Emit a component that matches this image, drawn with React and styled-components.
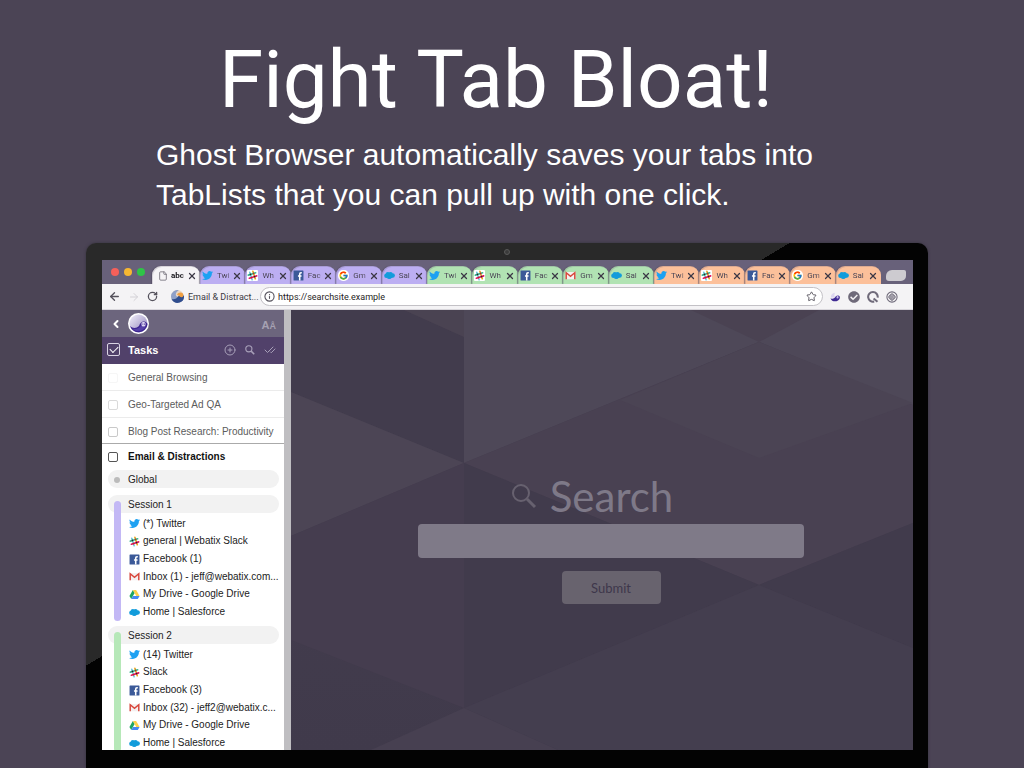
import React from "react";
import styled, { createGlobalStyle } from "styled-components";
import { FaTwitter, FaCheckCircle } from "react-icons/fa";
import { FcGoogle } from "react-icons/fc";
import { ArrowLeft, ArrowRight, RotateCw, Info, Star, File, X, ChevronLeft, CirclePlus, CheckCheck } from "lucide-react";

const Global = createGlobalStyle`
  * { box-sizing: border-box; }
  body { margin: 0; background: #4b4455; }
  button, input { font: inherit; color: inherit; }
  svg { display: block; flex: none; }
`;

const sans = `"Liberation Sans", Arial, sans-serif`;
const ui = `Roboto, "Liberation Sans", sans-serif`;

const Page = styled.main`
  display: flex;
  flex-direction: column;
  height: 100vh;
  min-height: 600px;
  background: #4b4455;
  overflow: hidden;
  font-family: ${sans};
`;

const Hero = styled.header`
  max-width: 680px;
  margin: 32px 40px 28px 156px;
  color: #fff;
`;

const Title = styled.h1`
  margin: 0 0 7px;
  font: 400 80px/96px Roboto, sans-serif;
  text-align: center;
  white-space: nowrap;
`;

const Lead = styled.p`
  margin: 0;
  font-size: 30px;
  line-height: 40px;
`;

const Device = styled.section`
  position: relative;
  flex: 1;
  min-height: 0;
  display: flex;
  margin: 0 96px 0 86px;
  padding: 17px 15px 18px 16px;
  border-radius: 10px 10px 0 0;
  background: linear-gradient(149deg, #292929 41%, #030303 41%);
  box-shadow: 0 0 3px #35303c;
`;

const Camera = styled.span`
  position: absolute;
  top: 6px;
  left: 50%;
  width: 6px;
  height: 6px;
  margin-left: -3px;
  border: 1px solid #5a5a5a;
  border-radius: 50%;
  background: #3b3b3b;
`;

const Screen = styled.div`
  flex: 1;
  min-width: 0;
  display: flex;
  flex-direction: column;
  overflow: hidden;
  background: #fff;
`;

const TabStrip = styled.div`
  display: flex;
  align-items: flex-end;
  height: 24px;
  padding: 0 7px 0 8px;
  background: #68617a;
`;

const Lights = styled.div`
  display: flex;
  gap: 5px;
  width: 42px;
  padding: 0 0 8px 1px;
`;

const Light = styled.span`
  width: 8px;
  height: 8px;
  border-radius: 50%;
  background: ${(p) => p.$color};
`;

const TabList = styled.div`
  flex: 1;
  min-width: 0;
  display: flex;
`;

const tabColors = { active: "#f5f3f6", violet: "#bcaef2", green: "#b1e3b3", orange: "#fcc09a" };

const TabItem = styled.div`
  flex: ${(p) => (p.$tone === "active" ? "0 0 48px" : "1 1 0")};
  min-width: 0;
  display: flex;
  align-items: center;
  height: 18px;
  padding: 1px 3px 0 ${(p) => (p.$tone === "active" ? "6px" : "2px")};
  border-radius: 9px 9px 0 0;
  background: ${(p) => tabColors[p.$tone]};
  box-shadow: inset 1px 1px 0 #5d567033, -1px 0 1px #4c455c88;
  color: #3c3846;
`;

const TabName = styled.span`
  flex: 1;
  min-width: 0;
  margin-left: ${(p) => (p.$bold ? 3 : 4)}px;
  color: ${(p) => (p.$bold ? "#17151b" : "#4a4555")};
  font: ${(p) => (p.$bold ? 700 : 400)} 8px/10px ${ui};
  white-space: nowrap;
  mask-image: linear-gradient(90deg, #000 60%, #0004);
`;

const IconButton = styled.button`
  display: grid;
  place-items: center;
  flex: none;
  padding: 0;
  border: 0;
  background: none;
  color: inherit;
`;

const NewTab = styled.button`
  width: 20px;
  height: 11px;
  margin: 0 0 3px 5px;
  padding: 0;
  border: 0;
  border-radius: 6px 2px 5px 3px;
  background: #cdcbd0;
`;

const Toolbar = styled.div`
  display: flex;
  align-items: center;
  height: 26px;
  padding: 0 15px 0 6px;
  background: #f4f3f5;
  border-bottom: 1px solid #d9d7dc;
  color: #55525c;
  font: 9px/12px ${ui};
`;

const NavButtons = styled.div`
  display: flex;
  gap: 7px;
  width: 63px;
`;

const Identity = styled.div`
  display: flex;
  align-items: center;
  gap: 4px;
  width: 89px;
  color: #3d3a42;
  white-space: nowrap;
`;

const Address = styled.label`
  flex: 1;
  min-width: 0;
  display: flex;
  align-items: center;
  gap: 3px;
  height: 19px;
  padding: 0 5px 0 3px;
  border: 1px solid #c3c1c6;
  border-radius: 10px;
  background: #fff;
`;

const AddressInput = styled.input`
  flex: 1;
  min-width: 0;
  padding: 0;
  border: 0;
  outline: 0;
  background: none;
  color: #1f1d24;
`;

const Extensions = styled.div`
  display: flex;
  gap: 7px;
  margin-left: 6px;
  color: #6f6a7a;
`;

const Content = styled.div`
  flex: 1;
  min-height: 0;
  display: flex;
`;

const Sidebar = styled.aside`
  flex: 0 0 189px;
  min-height: 0;
  overflow: hidden;
  border-right: 7px solid #bfbec1;
  background: #fff;
  color: #222;
  font-size: 10px;
  line-height: 12px;
`;

const Brand = styled.div`
  display: flex;
  align-items: center;
  gap: 6px;
  height: 27px;
  padding: 0 8px;
  background: #6c657d;
  color: #fff;
`;

const TextSize = styled.button`
  margin: 3px 0 0 auto;
  padding: 0;
  border: 0;
  background: none;
  color: #a6a1b2;
  font: 700 11px/14px ${sans};
  small { font-size: 9px; }
`;

const TasksBar = styled.div`
  display: flex;
  align-items: center;
  height: 27px;
  padding: 0 8px 2px 5px;
  background: #51416a;
  color: #a79fb8;
`;

const TasksLabel = styled.label`
  flex: 1;
  display: flex;
  align-items: center;
  gap: 8px;
  color: #fff;
  font: 700 11px/14px ${sans};
`;

const Check = styled.input`
  appearance: none;
  flex: none;
  width: ${(p) => (p.$large ? 13 : 10)}px;
  height: ${(p) => (p.$large ? 13 : 10)}px;
  margin: ${(p) => (p.$large ? 0 : "0 1px")};
  border: 1px solid ${(p) => p.$color};
  border-radius: 2px;
  display: grid;
  place-items: center;
  &:checked::after {
    content: "";
    width: 7px;
    height: 4px;
    margin-bottom: 2px;
    border: solid #fff;
    border-width: 0 0 1px 1px;
    rotate: -45deg;
  }
`;

const Tools = styled.div`
  display: flex;
  align-items: center;
  gap: 9px;
`;

const TaskRow = styled.label`
  display: flex;
  align-items: center;
  gap: 9px;
  height: ${(p) => (p.$last ? 26 : 27)}px;
  padding: 2px 0 0 5px;
  border-bottom: 1px solid ${(p) => (p.$last ? "#aaa" : "#ebebeb")};
  color: #5c5c5c;
  white-space: nowrap;
`;

const GroupRow = styled(TaskRow)`
  height: 26px;
  padding-top: 0;
  border: 0;
  color: #111;
  font-weight: 700;
`;

const Sessions = styled.div`
  display: grid;
  gap: 5px;
  padding: 0 7px 0 6px;
`;

const Pill = styled.div`
  grid-column: 1 / -1;
  grid-row: 1;
  display: flex;
  align-items: center;
  height: 18px;
  padding: 1px 0 0 ${(p) => (p.$dot ? 6 : 20)}px;
  gap: 8px;
  border-radius: 9px;
  background: #f2f2f2;
`;

const Dot = styled.span`
  width: 6px;
  height: 6px;
  border-radius: 50%;
  background: #bbb;
`;

const Session = styled.section`
  display: grid;
  grid-template-columns: 20px 1fr;
  grid-template-rows: 18px auto;
  row-gap: 2px;
  &:first-of-type { margin-top: 2px; }
`;

const Bar = styled.span`
  grid-column: 1;
  grid-row: 1 / 3;
  z-index: 1;
  width: 7px;
  margin: 6px 0 0 6px;
  border-radius: 4px;
  background: ${(p) => p.$color};
`;

const Links = styled.ul`
  grid-column: 2;
  grid-row: 2;
  display: grid;
  grid-template-rows: repeat(6, 1fr);
  height: 106px;
  margin: 0;
  padding: 0;
  list-style: none;
`;

const SiteLink = styled.a`
  display: flex;
  align-items: center;
  gap: 3px;
  height: 100%;
  padding-left: 1px;
  color: #222;
  text-decoration: none;
  white-space: nowrap;
`;

const Viewport = styled.div`
  position: relative;
  flex: 1;
  min-width: 0;
  overflow: hidden;
  background: #423c4d;
`;

const Backdrop = styled.svg`
  position: absolute;
  inset: 0;
  width: 100%;
  height: 100%;
`;

const SearchForm = styled.form`
  position: relative;
  display: flex;
  flex-direction: column;
  align-items: center;
  padding: 160px 0 0 18px;
  font-family: Lato, sans-serif;
`;

const SearchTitle = styled.label`
  display: flex;
  align-items: center;
  gap: 13px;
  margin: 0 38px 2px 0;
  color: #7e7988;
  font-size: 42px;
  line-height: 52px;
`;

const SearchInput = styled.input`
  width: 386px;
  max-width: 90%;
  height: 34px;
  padding: 0 10px;
  border: 0;
  border-radius: 4px;
  background: #7f7a88;
`;

const Submit = styled.button`
  width: 99px;
  height: 33px;
  margin-top: 13px;
  padding: 0;
  border: 0;
  border-radius: 4px;
  background: #68636e;
  color: #3e374b;
  font-size: 13px;
`;

const SlackIcon = ({ size }) => (
  <svg width={size} height={size} viewBox="0 0 20 20" strokeWidth="3" strokeLinecap="round">
    <rect width="20" height="20" rx="2" fill="#fff" />
    <g transform="rotate(-18 10 10)">
      <path d="M7 3v14" stroke="#6ecadc" />
      <path d="M13 3v14" stroke="#e9a820" />
      <path d="M3 7h14" stroke="#3eb991" />
      <path d="M3 13h14" stroke="#e01563" />
      <path d="M7 7v0M13 13v0" stroke="#33202a" />
      <path d="M13 7v0M7 13v0" stroke="#c3271c" />
    </g>
  </svg>
);

const FacebookIcon = ({ size }) => (
  <svg width={size} height={size} viewBox="0 0 20 20">
    <rect x="1" y="1" width="18" height="18" rx="1" fill="#3b5998" />
    <path d="M16 5h-1.500q-2.300 0-2.300 2.300V19M9 11h6.500" fill="none" stroke="#fff" strokeWidth="2.800" />
  </svg>
);

const GmailIcon = ({ size }) => (
  <svg width={size} height={size} viewBox="0 0 20 20">
    <rect x="1" y="3.500" width="18" height="13.500" rx="1" fill="#f4f0f0" />
    <path d="M2.200 17V5l7.800 6.500L17.800 5v12" fill="none" stroke="#d8453a" strokeWidth="2.600" />
  </svg>
);

const DriveIcon = ({ size }) => (
  <svg width={size} height={size} viewBox="0 0 20 20">
    <path d="M7 2 0.800 12.500 4 18l6.300-10.600z" fill="#1fa463" />
    <path d="M7 2h6l6.200 10.500h-6z" fill="#ffd04b" />
    <path d="M7.300 12.500h11.900L16 18H4z" fill="#4688f4" />
  </svg>
);

const SalesforceIcon = ({ size }) => (
  <svg width={size} height={size} viewBox="0 0 20 20" fill="#129cdb">
    <circle cx="4.500" cy="10.500" r="4.200" />
    <circle cx="7" cy="7.500" r="4" />
    <circle cx="12" cy="7.500" r="3.800" />
    <circle cx="15.800" cy="10" r="4" />
    <circle cx="9.500" cy="12.500" r="4" />
    <circle cx="13" cy="12" r="3" />
  </svg>
);

const TwitterIcon = ({ size }) => <FaTwitter size={size} color="#1da1f2" />;

const GoogleIcon = ({ size }) => (
  <svg width={size} height={size} viewBox="0 0 20 20">
    <rect width="20" height="20" rx="9" fill="#fff" />
    <FcGoogle x="1" y="1" width="18" height="18" size={18} />
  </svg>
);

const PageIcon = ({ size }) => <File size={size} strokeWidth={2} color="#716d78" />;

const GhostIcon = ({ size }) => (
  <svg width={size} height={size} viewBox="0 0 42 42">
    <defs>
      <linearGradient id="orb" x1="0" y1="0" x2="1" y2="1">
        <stop offset="0" stopColor="#f4f1fb" />
        <stop offset="0.6" stopColor="#b5acd3" />
      </linearGradient>
    </defs>
    <circle cx="21" cy="21" r="21" fill="#fff" />
    <circle cx="21" cy="21" r="18" fill="url(#orb)" />
    <path d="M4 26c5 5 13 5 18 0 2-6 5-9 10-9 4 0 7 3 7 6A18 18 0 0 1 4 26z" fill="#3d2590" />
    <path d="M9 31c7 2 14 0 17-6 3 4 7 4 10 2-4 9-20 13-27 4z" fill="#5540a8" />
    <rect x="27" y="18" width="8" height="9" rx="3" fill="#ddd6f3" />
    <path d="M29 21h1.500v2.500H29zM32 21h1.500v2.500H32z" fill="#3d2590" />
  </svg>
);

const MiniGhost = () => (
  <svg width="12" height="12" viewBox="0 0 20 20">
    <path d="M3 11a8 8 0 0 1 7-8c-2 4-1 7 1 8z" fill="#dcd6ef" />
    <path d="M2.500 12c3 1.500 6 1 7.500-1 1-2 2.500-3.500 5-3.500 2.500 0 3.500 2 3 4.500-1.500 6-13 8-15.500 0z" fill="#3f2a93" />
    <rect x="12.500" y="8.500" width="3.500" height="4" rx="1.500" fill="#c4b9ea" />
  </svg>
);

const IdentityIcon = () => (
  <svg width="13" height="13" viewBox="0 0 20 20">
    <circle cx="10" cy="10" r="10" fill="#e9d6c4" />
    <path d="M0 10a10 10 0 0 1 12-9.800C7 3 6 8 9 10s7-1 11-.5V10a10 10 0 0 1-20 0z" fill="#8fa0c8" />
    <path d="M1 14c5 1 8-1 10-4s6-3 9-1a10 10 0 0 1-19 5z" fill="#2f4d8e" />
    <path d="M9 7c2-3 6-4 9-2 2 4 1 6-2 6s-5-4-7-4z" fill="#f0a044" />
  </svg>
);

const QIcon = () => (
  <svg width="12" height="12" viewBox="0 0 20 20" fill="none" stroke="currentColor" strokeWidth="3.400">
    <path d="M12 17.500A8 8 0 1 1 17.800 11" />
    <path d="M11 12.500 17.500 18" />
  </svg>
);

const TargetIcon = () => (
  <svg width="12" height="12" viewBox="0 0 20 20" fill="none" stroke="currentColor" strokeWidth="1.800">
    <circle cx="10" cy="10" r="8.500" />
    <rect x="5.800" y="5.800" width="8.400" height="8.400" rx="1.500" transform="rotate(45 10 10)" />
    <circle cx="10" cy="10" r="2" />
  </svg>
);

const Magnifier = ({ size, color = "currentColor", weight = 2 }) => (
  <svg width={size} height={size} viewBox="0 0 26 26" fill="none" stroke={color}>
    <circle cx="10" cy="10" r="8" strokeWidth={weight} />
    <path d="M16 16l8 8" strokeWidth={weight + 1} />
  </svg>
);

const tabs = [
  ["active", PageIcon, "abc"],
  ["violet", TwitterIcon, "Twi"],
  ["violet", SlackIcon, "Wh"],
  ["violet", FacebookIcon, "Fac"],
  ["violet", GoogleIcon, "Gm"],
  ["violet", SalesforceIcon, "Sal"],
  ["green", TwitterIcon, "Twi"],
  ["green", SlackIcon, "Wh"],
  ["green", FacebookIcon, "Fac"],
  ["green", GmailIcon, "Gm"],
  ["green", SalesforceIcon, "Sal"],
  ["orange", TwitterIcon, "Twi"],
  ["orange", SlackIcon, "Wh"],
  ["orange", FacebookIcon, "Fac"],
  ["orange", GoogleIcon, "Gm"],
  ["orange", SalesforceIcon, "Sal"],
];

const sessions = [
  {
    name: "Session 1",
    color: "#c3b8f5",
    links: [
      [TwitterIcon, "(*) Twitter"],
      [SlackIcon, "general | Webatix Slack"],
      [FacebookIcon, "Facebook (1)"],
      [GmailIcon, "Inbox (1) - jeff@webatix.com..."],
      [DriveIcon, "My Drive - Google Drive"],
      [SalesforceIcon, "Home | Salesforce"],
    ],
  },
  {
    name: "Session 2",
    color: "#b6e8b8",
    links: [
      [TwitterIcon, "(14) Twitter"],
      [SlackIcon, "Slack"],
      [FacebookIcon, "Facebook (3)"],
      [GmailIcon, "Inbox (32) - jeff2@webatix.c..."],
      [DriveIcon, "My Drive - Google Drive"],
      [SalesforceIcon, "Home | Salesforce"],
    ],
  },
];

function Browser() {
  return (
    <Screen>
      <TabStrip>
        <Lights>
          <Light $color="#f5605a" />
          <Light $color="#f7b731" />
          <Light $color="#2fc447" />
        </Lights>
        <TabList>
          {tabs.map(([tone, Icon, name], i) => (
            <TabItem key={i} $tone={tone}>
              <Icon size={tone === "active" ? 10 : 11} />
              <TabName $bold={tone === "active"}>{name}</TabName>
              <IconButton aria-label="Close tab">
                <X size={10} strokeWidth={3} />
              </IconButton>
            </TabItem>
          ))}
        </TabList>
        <NewTab aria-label="New tab" />
      </TabStrip>
      <Toolbar>
        <NavButtons>
          <IconButton aria-label="Back"><ArrowLeft size={13} strokeWidth={2.5} /></IconButton>
          <IconButton aria-label="Forward"><ArrowRight size={12} color="#d3d1d6" /></IconButton>
          <IconButton aria-label="Reload"><RotateCw size={11} strokeWidth={2.8} /></IconButton>
        </NavButtons>
        <Identity>
          <IdentityIcon />
          Email &amp; Distract...
        </Identity>
        <Address>
          <Info size={11} strokeWidth={2.4} />
          <AddressInput aria-label="Address" defaultValue="https://searchsite.example" />
          <Star size={11} strokeWidth={2} />
        </Address>
        <Extensions>
          <MiniGhost />
          <FaCheckCircle size={12} />
          <QIcon />
          <TargetIcon />
        </Extensions>
      </Toolbar>
      <Content>
        <TaskPanel />
        <SearchPage />
      </Content>
    </Screen>
  );
}

function TaskPanel() {
  return (
    <Sidebar>
      <Brand>
        <IconButton aria-label="Collapse"><ChevronLeft size={12} strokeWidth={4} /></IconButton>
        <IconButton aria-label="Home"><GhostIcon size={21} /></IconButton>
        <TextSize aria-label="Text size">A<small>Å</small></TextSize>
      </Brand>
      <TasksBar>
        <TasksLabel>
          <Check type="checkbox" defaultChecked $large $color="#d9d3e3" />
          Tasks
        </TasksLabel>
        <Tools>
          <IconButton aria-label="Add"><CirclePlus size={12} /></IconButton>
          <IconButton aria-label="Find"><Magnifier size={10} weight={3} /></IconButton>
          <IconButton aria-label="Complete all"><CheckCheck size={12} /></IconButton>
        </Tools>
      </TasksBar>
      <TaskRow><Check type="checkbox" $color="#f6f6f6" />General Browsing</TaskRow>
      <TaskRow><Check type="checkbox" $color="#dadada" />Geo-Targeted Ad QA</TaskRow>
      <TaskRow $last><Check type="checkbox" $color="#c9c9c9" />Blog Post Research: Productivity</TaskRow>
      <GroupRow><Check type="checkbox" $color="#555" />Email &amp; Distractions</GroupRow>
      <Sessions>
        <Pill $dot><Dot />Global</Pill>
        {sessions.map((s) => (
          <Session key={s.name}>
            <Pill>{s.name}</Pill>
            <Bar $color={s.color} />
            <Links>
              {s.links.map(([Icon, text]) => (
                <li key={text}>
                  <SiteLink href="#"><Icon size={11} />{text}</SiteLink>
                </li>
              ))}
            </Links>
          </Session>
        ))}
      </Sessions>
    </Sidebar>
  );
}

function SearchPage() {
  return (
    <Viewport>
      <Backdrop viewBox="0 0 622 440" preserveAspectRatio="none" aria-hidden="true">
        <defs>
          <linearGradient id="shade" x1="0" y1="0" x2="0" y2="1">
            <stop offset="0" stopColor="#463f50" />
            <stop offset="1" stopColor="#403a4b" />
          </linearGradient>
        </defs>
        <path d="M0 0H622V440H0z" fill="url(#shade)" />
        <path d="M0 0H113L173 27V153L0 82z" fill="#423c4d" />
        <path d="M113 0H173V27z" fill="#4a4352" />
        <path d="M0 82 173 153 0 226z" fill="#4c4555" />
        <path d="M173 0H622V95L468 32 173 153z" fill="#4e4858" />
        <path d="M400 0H528L468 32z" fill="#4a4252" />
        <path d="M173 153 468 32 622 95V213L468 275z" fill="#494152" />
        <path d="M329 90 468 32 622 93 468 148z" fill="#4b4454" />
        <path d="M0 226 173 153V398L0 330z" fill="#453d4f" />
        <path d="M173 153 468 275 173 398z" fill="#413b4c" />
        <path d="M468 275 622 213V338z" fill="#413b4c" />
        <path d="M468 275 622 338V440H267L173 398z" fill="#443e4f" />
        <path d="M80 440 173 398 267 440z" fill="#474051" />
      </Backdrop>
      <SearchForm onSubmit={(e) => e.preventDefault()}>
        <SearchTitle htmlFor="query">
          <Magnifier size={26} color="#67616f" />
          Search
        </SearchTitle>
        <SearchInput id="query" type="text" />
        <Submit type="submit">Submit</Submit>
      </SearchForm>
    </Viewport>
  );
}

export default function App() {
  return (
    <Page>
      <Global />
      <Hero>
        <Title>Fight Tab Bloat!</Title>
        <Lead>Ghost Browser automatically saves your tabs into TabLists that you can pull up with one click.</Lead>
      </Hero>
      <Device>
        <Camera />
        <Browser />
      </Device>
    </Page>
  );
}
